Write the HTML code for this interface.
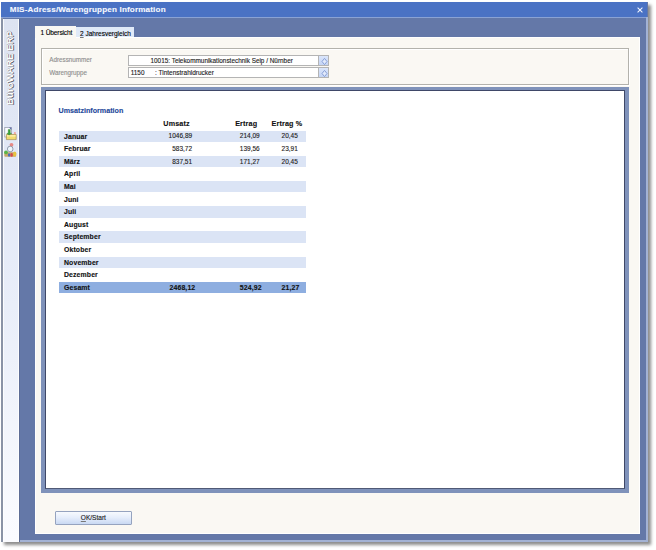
<!DOCTYPE html>
<html><head><meta charset="utf-8">
<style>
*{margin:0;padding:0;box-sizing:border-box}
html,body{width:656px;height:550px;overflow:hidden;background:#fff;font-family:"Liberation Sans",sans-serif}
.a{position:absolute}
.t{position:absolute;white-space:nowrap;line-height:1;-webkit-text-stroke:0.12px currentColor}
#win{left:1px;top:2px;width:647px;height:540px;background:#6478a8;box-shadow:3px 3px 3px 0px rgba(0,0,0,0.45)}
#title{left:1px;top:2px;width:646px;height:15px;background:#4a72c4}
#tline{left:1px;top:17px;width:646px;height:1px;background:#8aa2d4}
#lb{left:1px;top:18px;width:2px;height:524px;background:#8a93a6}
#rb{left:646px;top:17px;width:2px;height:525px;background:#a3b2d4}
#bb{left:19px;top:540px;width:629px;height:2px;background:#a3b2d4}
#leftp{left:3px;top:19px;width:16px;height:523px;background:linear-gradient(#dde3f1,#e3e9f7 30%,#e9eef9 55%,#f9fafe 94%,#fafbff);box-shadow:inset 1px 0 0 rgba(255,255,255,0.8),inset -1px 0 0 rgba(255,255,255,0.8),1px 0 0 #5d6d96}
#cream{left:35px;top:37px;width:605px;height:497px;background:#faf8f3;border:1px solid #fff}
#tab1{left:35px;top:26px;width:41px;height:12px;background:#faf8f3}
#tab2{left:76px;top:27px;width:58px;height:10px;background:#e0eaf8}
#grp{left:41px;top:48px;width:588px;height:37px;border:1px solid #b3b2ac;box-shadow:inset 1px 1px 0 #fff,1px 1px 0 #fff}
.fld{width:201px;height:10.5px;border:1px solid #b4b4b4;background:#fff}
.spin{width:10.5px;height:10.5px;border:1px solid #b4b4b4;background:linear-gradient(#dbe6fb,#c4d4f4)}
.dia{position:absolute;left:2.5px;top:2px;width:4px;height:5px;border:1px solid #8ea3d6;transform:scaleX(0.8) rotate(45deg)}
#panel{left:41px;top:87px;width:588px;height:405.6px;background:#7f92ba}
#panelin{left:45px;top:90px;width:580px;height:399px;background:#fff;border:1px solid #3f4868;border-bottom-color:#505a76}
.row{left:59px;width:247px;height:11.5px;background:#dbe4f5}
#btn{left:55px;top:511px;width:77px;height:14px;border:1px solid #95a3bf;border-radius:1px;background:linear-gradient(#f7fafe,#e6eefb 45%,#c9d9f3)}
.lbl{font-size:6.3px;color:#8e8e8e}
.m{font-size:6.9px;font-weight:bold;color:#111;letter-spacing:0.12px}
.n{font-size:6.5px;color:#222;text-align:right}
.h{font-size:7.2px;font-weight:bold;color:#111;letter-spacing:0.15px}
</style></head><body>
<div id="win" class="a"></div>
<div id="title" class="a"></div>
<div id="tline" class="a"></div>
<div id="lb" class="a"></div>
<div id="rb" class="a"></div>
<div id="bb" class="a"></div>
<div class="t" style="left:9.8px;top:5.65px;font-size:8.1px;letter-spacing:0.16px;font-weight:bold;color:#f6f8ff">MIS-Adress/Warengruppen Information</div>
<svg class="a" style="left:636.5px;top:6.5px" width="6" height="6" viewBox="0 0 6 6"><path d="M0.6 0.6L5.4 5.4M5.4 0.6L0.6 5.4" stroke="#f4f7ff" stroke-width="1.05"/></svg>
<div id="leftp" class="a"></div>
<div class="t" style="left:5.0px;top:104.6px;font-size:9.7px;font-weight:bold;color:#fff;transform-origin:0 0;transform:rotate(-90deg);text-shadow:-0.5px 1px 0.5px #484c58,0.4px 0.4px 0.4px #70747e">BüroWARE ERP</div>
<svg class="a" style="left:0;top:120px" width="20" height="42" viewBox="0 120 20 42">
<rect x="4.8" y="127.5" width="6.5" height="9.5" fill="#fbfcff" stroke="#8f97a8" stroke-width="0.7"/>
<path d="M9 127.6 L11.4 127.6 L11.4 130 Z" fill="#5a63a8"/>
<path d="M8.2 129.5 L10.3 129.5 L10.3 133.2 L11.6 133.2 L9.2 136.6 L6.8 133.2 L8.2 133.2 Z" fill="#3aa23a" stroke="#2b7f2b" stroke-width="0.3"/>
<path d="M6.4 134.5 L8 134.5 L9.2 136.2 L10.6 134.5 L16.2 134.5 L16.2 139.6 L6.4 139.6 Z" fill="#f1dc70" stroke="#9a8240" stroke-width="0.6"/>
<rect x="7" y="135.2" width="8.6" height="1.3" fill="#fff3b0"/>
<circle cx="14.9" cy="133.2" r="1.1" fill="#f0a8a0"/>
<circle cx="11.5" cy="144.8" r="1.9" fill="#e88a86"/>
<rect x="4.3" y="152.2" width="11.8" height="4.6" rx="1" fill="#c7a86a"/>
<circle cx="6" cy="152.3" r="1.9" fill="#58b548"/>
<ellipse cx="9.1" cy="155" rx="1.2" ry="1.8" fill="#4a6fc0"/>
<ellipse cx="11.6" cy="154.9" rx="1.3" ry="1.9" fill="#d84a4a"/>
<ellipse cx="14.8" cy="154" rx="1.6" ry="2.6" fill="#e8c440"/>
<circle cx="10.2" cy="149" r="2.8" fill="#eef6fc" stroke="#5d6a80" stroke-width="0.6"/>
</svg>
<div id="cream" class="a"></div>
<div id="tab1" class="a"></div>
<div id="tab2" class="a"></div>
<div class="t" style="left:40.5px;top:29.54px;font-size:6.6px;letter-spacing:-0.15px;color:#000">1 Übersicht</div>
<div class="t" style="left:80px;top:30.66px;font-size:6.5px;color:#000"><u style="text-decoration-thickness:0.5px;text-underline-offset:1px;text-decoration-color:#777">2</u> Jahresvergleich</div>
<div id="grp" class="a"></div>
<div class="t lbl" style="left:49.2px;top:57.28px">Adressnummer</div>
<div class="t lbl" style="left:49.2px;top:70.08px">Warengruppe</div>
<div class="a fld" style="left:128px;top:55px"></div>
<div class="a fld" style="left:128px;top:67.2px"></div>
<div class="a spin" style="left:318.3px;top:55px"><svg class="a" style="left:2px;top:1px" width="7" height="9" viewBox="0 0 7 9"><path d="M3.5 1.4L6 4.5L3.5 7.6L1 4.5Z" fill="#e2eafb" stroke="#7f98d2" stroke-width="0.9" stroke-linejoin="round"/></svg></div>
<div class="a spin" style="left:318.3px;top:67.2px"><svg class="a" style="left:2px;top:1px" width="7" height="9" viewBox="0 0 7 9"><path d="M3.5 1.4L6 4.5L3.5 7.6L1 4.5Z" fill="#e2eafb" stroke="#7f98d2" stroke-width="0.9" stroke-linejoin="round"/></svg></div>
<div class="t" style="left:150.5px;top:57.97px;font-size:6.4px;color:#222">10015: Telekommunikationstechnik Seip / Nürnber</div>
<div class="t" style="left:130.7px;top:70.07px;font-size:6.4px;color:#222">1150</div>
<div class="t" style="left:155px;top:70.06px;font-size:6.5px;color:#222">: Tintenstrahldrucker</div>
<div id="panel" class="a"></div>
<div id="panelin" class="a"></div>
<div class="t" style="left:58.6px;top:108.17px;font-size:7.15px;font-weight:bold;color:#24489a">Umsatzinformation</div>
<div class="t h" style="right:466.20px;top:120.06px">Umsatz</div>
<div class="t h" style="right:398.80px;top:120.06px">Ertrag</div>
<div class="t h" style="right:353.70px;top:120.06px">Ertrag %</div>
<div class="a row" style="top:130.50px"></div>
<div class="t m" style="left:64px;top:133.50px">Januar</div>
<div class="t n" style="right:463.90px;top:133.25px">1046,89</div>
<div class="t n" style="right:396.30px;top:133.25px">214,09</div>
<div class="t n" style="right:358.20px;top:133.25px">20,45</div>
<div class="t m" style="left:64px;top:146.12px">Februar</div>
<div class="t n" style="right:463.90px;top:145.88px">583,72</div>
<div class="t n" style="right:396.30px;top:145.88px">139,56</div>
<div class="t n" style="right:358.20px;top:145.88px">23,91</div>
<div class="a row" style="top:155.74px"></div>
<div class="t m" style="left:64px;top:158.74px">März</div>
<div class="t n" style="right:463.90px;top:158.50px">837,51</div>
<div class="t n" style="right:396.30px;top:158.50px">171,27</div>
<div class="t n" style="right:358.20px;top:158.50px">20,45</div>
<div class="t m" style="left:64px;top:171.36px">April</div>
<div class="a row" style="top:180.98px"></div>
<div class="t m" style="left:64px;top:183.98px">Mai</div>
<div class="t m" style="left:64px;top:196.60px">Juni</div>
<div class="a row" style="top:206.22px"></div>
<div class="t m" style="left:64px;top:209.22px">Juli</div>
<div class="t m" style="left:64px;top:221.84px">August</div>
<div class="a row" style="top:231.46px"></div>
<div class="t m" style="left:64px;top:234.46px">September</div>
<div class="t m" style="left:64px;top:247.08px">Oktober</div>
<div class="a row" style="top:256.70px"></div>
<div class="t m" style="left:64px;top:259.70px">November</div>
<div class="t m" style="left:64px;top:272.32px">Dezember</div>
<div class="a row" style="top:281.94px;background:#8eaee0"></div>
<div class="t m" style="left:64px;top:284.94px">Gesamt</div>
<div class="t m" style="right:460.70px;top:284.94px">2468,12</div>
<div class="t m" style="right:394.40px;top:284.94px">524,92</div>
<div class="t m" style="right:356.60px;top:284.94px">21,27</div>
<div id="btn" class="a"></div>
<div class="t" style="left:80.8px;top:515.45px;font-size:6.55px;color:#222"><u style="text-decoration-thickness:0.5px;text-underline-offset:1px;text-decoration-color:#777">O</u>K/Start</div>
</body></html>
